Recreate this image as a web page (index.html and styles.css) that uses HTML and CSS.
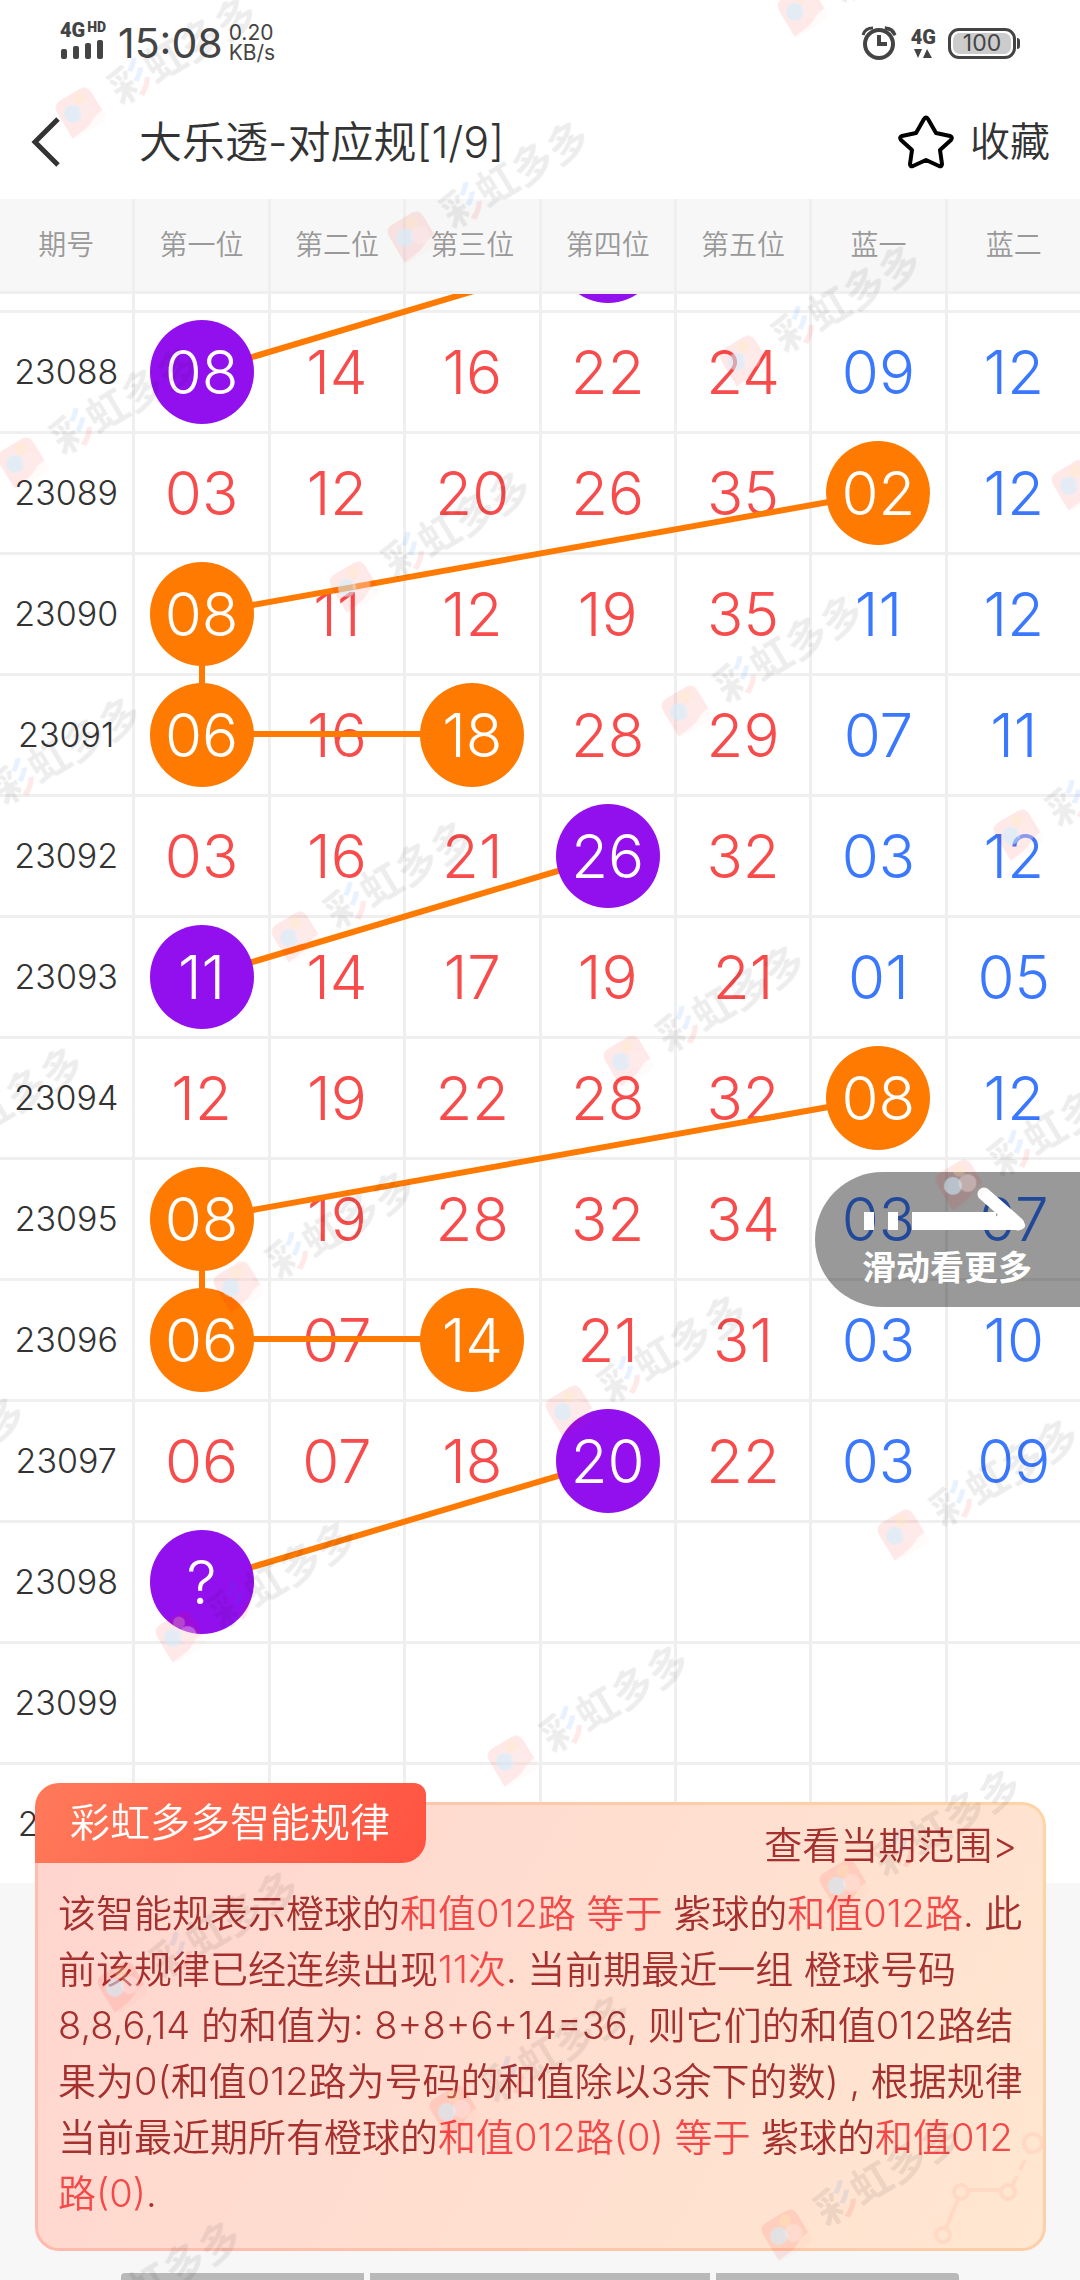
FILE: index.html
```html
<!DOCTYPE html>
<html lang="zh-CN">
<head>
    <meta charset="UTF-8">
    <meta name="viewport" content="width=device-width, initial-scale=1.0">
    <title>大乐透-对应规</title>
    <link rel="stylesheet" href="styles.css">
</head>
<body>
    <div class="status-bar">
        <div class="status-left">
            <div class="signal">
                <div class="network">4G<sup>HD</sup></div>
                <svg width="44" height="20" viewBox="0 0 44 20" fill="#444">
                    <rect x="1" y="9" width="6" height="10" rx="2"/>
                    <rect x="13" y="6" width="6" height="13" rx="2"/>
                    <rect x="25" y="3" width="6" height="16" rx="2"/>
                    <rect x="37" y="0" width="6" height="19" rx="2"/>
                </svg>
            </div>
            <span class="clock">15:08</span>
            <div class="speed">0.20<br>KB/s</div>
        </div>
        <div class="status-right">
            <svg width="36" height="36" viewBox="0 0 36 36" fill="none" stroke="#444" stroke-width="4">
                <circle cx="18" cy="19" r="14"/>
                <path d="M18 10v9h8"/>
                <path d="M2 10Q4 3 12 3M24 3Q32 3 34 10L30 5 24 3z" stroke-width="3"/>
            </svg>
            <div class="mobile-data">
                <span>4G</span>
                <svg width="18" height="10" viewBox="0 0 18 10" fill="#444">
                    <path d="M0 0h8L4 9zM9 9h9L13 0z"/>
                </svg>
            </div>
            <div class="battery"><span>100</span></div>
        </div>
    </div>

    <header class="title-bar">
        <button class="back" aria-label="返回">
            <svg width="30" height="52" viewBox="0 0 30 52" fill="none" stroke="#333" stroke-width="5">
                <path d="M27 3L4 26l23 23"/>
            </svg>
        </button>
        <h1>大乐透-对应规[1/9]</h1>
        <button class="favorite">
            <svg width="56" height="54" viewBox="0 0 56 54" fill="none" stroke="#000" stroke-width="4" stroke-linejoin="round">
                <path d="M26 4q2-3 4 0l8 14 14 3q3 1 1 4L42 35l2 14q0 3-3 2l-13-6-13 6q-3 1-3-2l2-14L3 25q-2-3 1-4l14-3z"/>
            </svg>
            <span>收藏</span>
        </button>
    </header>

    <main class="chart">
        <table>
            <thead>
                <tr><th>期号</th><th>第一位</th><th>第二位</th><th>第三位</th><th>第四位</th><th>第五位</th><th>蓝一</th><th>蓝二</th></tr>
            </thead>
            <tbody>
                <tr class="partial"><td></td><td></td><td></td><td></td><td><div class="peek"><span class="ball purple"></span></div></td><td></td><td></td><td></td></tr>
                <tr><td>23088</td><td><span class="ball purple">08</span></td><td>14</td><td>16</td><td>22</td><td>24</td><td>09</td><td>12</td></tr>
                <tr><td>23089</td><td>03</td><td>12</td><td>20</td><td>26</td><td>35</td><td><span class="ball orange">02</span></td><td>12</td></tr>
                <tr><td>23090</td><td><span class="ball orange">08</span></td><td>11</td><td>12</td><td>19</td><td>35</td><td>11</td><td>12</td></tr>
                <tr><td>23091</td><td><span class="ball orange">06</span></td><td>16</td><td><span class="ball orange">18</span></td><td>28</td><td>29</td><td>07</td><td>11</td></tr>
                <tr><td>23092</td><td>03</td><td>16</td><td>21</td><td><span class="ball purple">26</span></td><td>32</td><td>03</td><td>12</td></tr>
                <tr><td>23093</td><td><span class="ball purple">11</span></td><td>14</td><td>17</td><td>19</td><td>21</td><td>01</td><td>05</td></tr>
                <tr><td>23094</td><td>12</td><td>19</td><td>22</td><td>28</td><td>32</td><td><span class="ball orange">08</span></td><td>12</td></tr>
                <tr><td>23095</td><td><span class="ball orange">08</span></td><td>19</td><td>28</td><td>32</td><td>34</td><td>03</td><td>07</td></tr>
                <tr><td>23096</td><td><span class="ball orange">06</span></td><td>07</td><td><span class="ball orange">14</span></td><td>21</td><td>31</td><td>03</td><td>10</td></tr>
                <tr><td>23097</td><td>06</td><td>07</td><td>18</td><td><span class="ball purple">20</span></td><td>22</td><td>03</td><td>09</td></tr>
                <tr><td>23098</td><td><span class="ball purple">?</span></td><td></td><td></td><td></td><td></td><td></td><td></td></tr>
                <tr><td>23099</td><td></td><td></td><td></td><td></td><td></td><td></td><td></td></tr>
                <tr><td>23100</td><td></td><td></td><td></td><td></td><td></td><td></td><td></td></tr>
            </tbody>
        </table>

        <!-- lines between the balls of one group -->
        <svg class="links" viewBox="0 0 1080 1592" preserveAspectRatio="none">
            <path d="M608-43L202 78"/>
            <path d="M879 199L202 320V440H472"/>
            <path d="M608 562L202 683"/>
            <path d="M879 804L202 925V1045H472"/>
            <path d="M608 1167L202 1288"/>
        </svg>

        <button class="more">
            <svg width="164" height="46" viewBox="0 0 164 46" fill="#fff">
                <path d="M2 25h10v18H2zM26 25h10v18H26zM50 25h84v18H50z"/>
                <path d="M122 7l34 30" stroke="#fff" stroke-width="13" stroke-linecap="round"/>
                <path d="M120 43h38q6-1 5-6l-20-16z"/>
            </svg>
            <span>滑动看更多</span>
        </button>
    </main>

    <section class="rule-card">
        <h2>彩虹多多智能规律</h2>
        <div class="card-top"><a href="#">查看当期范围&gt;</a></div>
        <p>该智能规表示橙球的<em>和值012路</em> <em>等于</em> 紫球的<em>和值012路</em>. 此前该规律已经连续出现<em>11次</em>. 当前期最近一组 橙球号码 8,8,6,14 的和值为: 8+8+6+14=36, 则它们的和值012路结果为0(和值012路为号码的和值除以3余下的数) , 根据规律当前最近期所有橙球的<em>和值012路(0)</em> <em>等于</em> 紫球的<em>和值012路(0)</em>.</p>
        <svg class="trend" width="112" height="116" viewBox="0 0 112 116" fill="none" stroke="#ffd9c4" stroke-width="4">
            <circle cx="12" cy="103" r="7"/>
            <circle cx="30" cy="60" r="7"/>
            <circle cx="77" cy="60" r="7"/>
            <circle cx="102" cy="11" r="9"/>
            <path d="M15 96L27 67M37 58h33"/>
            <path d="M81 54L98 20" stroke-dasharray="11 7"/>
        </svg>
    </section>

    <div class="nav-hint"><i></i><i></i><i></i></div>

    <svg class="watermark" aria-hidden="true">
        <defs>
            <!-- the first character has a blue and a red stroke on its right side -->
            <pattern id="wm-cai" patternUnits="userSpaceOnUse" x="36" y="-22" width="42" height="50">
                <rect width="25" height="50" fill="#000" fill-opacity=".07"/>
                <rect x="25" width="17" height="27" fill="#06f" fill-opacity=".09"/>
                <rect x="25" y="27" width="17" height="23" fill="#f00" fill-opacity=".09"/>
            </pattern>
            <g id="wm" transform="rotate(-31)">
                <path d="M-11-20h22q9 0 9 9v21q-8 0-14 4t-26 5v-30q0-9 9-9z" fill="#f00" fill-opacity=".09"/>
                <path d="M-20 19q20-1 26-5t14-4v2q0 9-9 9h-22q-8 0-9-2z" fill="#f30" fill-opacity=".02"/>
                <circle cx="-7" cy="-2" r="9" fill="#cef" fill-opacity=".55"/>
                <circle cx="7" cy="3" r="9" fill="#fee" fill-opacity=".35"/>
                <circle cx="6" cy="-12" r="6" fill="#fea" fill-opacity=".25"/>
                <text x="38" y="15" fill="url(#wm-cai)">彩</text>
                <text x="79" y="15" fill="#000" fill-opacity=".07">虹多多</text>
            </g>
            <g id="wm-line">
                <use href="#wm" transform="translate(80 112)"/>
                <use href="#wm" transform="translate(412 236)"/>
                <use href="#wm" transform="translate(744 360)"/>
                <use href="#wm" transform="translate(1076 484)"/>
            </g>
        </defs>
        <use href="#wm-line" transform="translate(58 -350)"/>
        <use href="#wm-line"/>
        <use href="#wm-line" transform="translate(-58 350)"/>
        <use href="#wm-line" transform="translate(-116 700)"/>
        <use href="#wm-line" transform="translate(-174 1050)"/>
        <use href="#wm-line" transform="translate(-232 1400)"/>
        <use href="#wm-line" transform="translate(-290 1750)"/>
        <use href="#wm-line" transform="translate(-348 2100)"/>
    </svg>
</body>
</html>
```
FILE: styles.css
```css
* {
    box-sizing: border-box;
}
body {
    margin: 0;
    min-height: 100vh;
    background-color: #f7f7f7;
    color: #333;
    font-family: Inter, "Noto Sans CJK SC", sans-serif;
    font-weight: 350;
    overflow-x: hidden;
}
button {
    padding: 0;
    border: none;
    background: none;
    color: inherit;
    font: inherit;
    cursor: pointer;
}
svg {
    display: block;
}

/* phone status bar */
.status-bar {
    display: flex;
    justify-content: space-between;
    align-items: center;
    height: 86px;
    padding: 0 64px 0 60px;
    background-color: #fff;
    color: #444;
    font-weight: 400;
}
.status-left,
.status-right {
    display: flex;
    align-items: center;
}
.signal {
    width: 58px;
    margin-top: -6px;
}
.network,
.mobile-data {
    font-family: Roboto, sans-serif;
    font-size: 20px;
    font-weight: 900;
    line-height: 20px;
}
.network sup {
    margin-left: 2px;
    font-size: 14px;
    line-height: 14px;
    vertical-align: 5px;
}
.clock {
    font-size: 41px;
}
.speed {
    margin-left: 6px;
    font-size: 21px;
    line-height: 20px;
}
.mobile-data {
    display: flex;
    flex-direction: column;
    align-items: center;
    gap: 2px;
    margin: 0 12px 0 14px;
}
.battery {
    position: relative;
    width: 68px;
    height: 31px;
    padding: 2px;
    border: 3px solid #444;
    border-radius: 11px;
}
.battery span {
    display: block;
    border-radius: 7px;
    background-color: #ccc;
    font-size: 23px;
    line-height: 21px;
    text-align: center;
}
.battery::after {
    content: "";
    position: absolute;
    top: 7px;
    right: -7px;
    width: 3px;
    height: 11px;
    border-radius: 0 3px 3px 0;
    background-color: #444;
}

.title-bar {
    display: flex;
    align-items: center;
    height: 113px;
    padding: 0 30px 2px 31px;
    background-color: #fff;
}
.back {
    width: 108px;
}
h1 {
    flex: 1;
    margin: 0;
    font-size: 43px;
    font-weight: 350;
    line-height: 60px;
}
.favorite {
    display: flex;
    align-items: center;
    gap: 16px;
    font-size: 40px;
    line-height: 54px;
}

/* number chart */
.chart {
    position: relative;
    overflow: hidden;
}
table {
    width: calc(100% + 3px);
    border-spacing: 0;
    table-layout: fixed;
    background-color: #fff;
}
th,
td {
    padding: 0;
    border-right: 3px solid #efefef;
    border-bottom: 3px solid #efefef;
    text-align: center;
}
th {
    height: 95px;
    padding-bottom: 4px;
    background-color: #f7f7f7;
    color: #999;
    font-size: 28px;
    font-weight: 350;
}
td {
    height: 121px;
    color: #f84b4b;
    font-size: 60px;
    line-height: 104px;
}
td:first-child {
    color: #333;
    font-size: 34px;
}
td:nth-child(n+7) {
    color: #3a78ff;
}
tr:last-child td {
    height: 118px;
    border-bottom: none;
}
thead tr:last-child th {
    border-bottom: 3px solid #efefef;
}
.partial td {
    height: 19px;
}
.peek {
    display: flex;
    justify-content: center;
    align-items: flex-end;
    height: 16px;
    padding-bottom: 7px;
    overflow: hidden;
}
.ball {
    display: block;
    flex: none;
    position: relative;
    z-index: 2;
    width: 104px;
    height: 104px;
    margin: 0 auto;
    border-radius: 50%;
    color: #fff;
}
.purple {
    background-color: #9210ee;
}
.orange {
    background-color: #ff7a00;
}
.links {
    position: absolute;
    top: 95px;
    left: 0;
    width: 100%;
    height: 1592px;
    fill: none;
    stroke: #ff7a00;
    stroke-width: 6px;
}
.more {
    position: absolute;
    top: 973px;
    right: 0;
    z-index: 3;
    width: 265px;
    height: 135px;
    padding: 0 0 0 47px;
    border-radius: 68px 0 0 68px;
    background-color: rgba(0, 0, 0, 0.4);
    color: #fff;
    font-size: 34px;
    font-weight: 600;
    line-height: 50px;
    text-align: left;
}
.more svg {
    margin-bottom: 10px;
}

/* rule card over the chart */
.rule-card {
    position: fixed;
    right: 34px;
    bottom: 29px;
    left: 35px;
    z-index: 4;
    padding: 0 20px 27px;
    border: 3px solid transparent;
    border-radius: 24px;
    background: linear-gradient(120deg, #ffd5ce, #ffe7d1) padding-box,
                linear-gradient(60deg, #ffb9ae, #ffd4a6) border-box;
    color: #a5302e;
    font-size: 38px;
}
.rule-card h2 {
    position: absolute;
    top: -22px;
    left: -3px;
    margin: 0;
    padding: 0 36px 0 35px;
    border-radius: 24px 12px 24px 0;
    background: linear-gradient(120deg, #ff7a5a, #ff5340);
    color: #fff;
    font-size: 40px;
    font-weight: 350;
    line-height: 80px;
}
.card-top {
    padding-right: 6px;
    line-height: 80px;
    text-align: right;
}
.card-top a {
    color: inherit;
    text-decoration: none;
}
.rule-card p {
    margin: 0;
    line-height: 56px;
}
.rule-card em {
    color: #f54848;
    font-style: normal;
}
.trend {
    position: absolute;
    right: 0;
    bottom: 0;
}

.nav-hint {
    display: flex;
    gap: 6px;
    position: fixed;
    right: 121px;
    bottom: 0;
    left: 121px;
    height: 7px;
    border-radius: 4px 4px 0 0;
    overflow: hidden;
}
.nav-hint i {
    flex: 1;
    background-color: #b9b9b9;
}
.nav-hint i:nth-child(2) {
    flex: 1.4;
}

.watermark {
    position: fixed;
    top: 0;
    left: 0;
    z-index: 5;
    width: 100%;
    height: 100%;
    pointer-events: none;
}
.watermark text {
    font-size: 41px;
    font-weight: 700;
}
```
